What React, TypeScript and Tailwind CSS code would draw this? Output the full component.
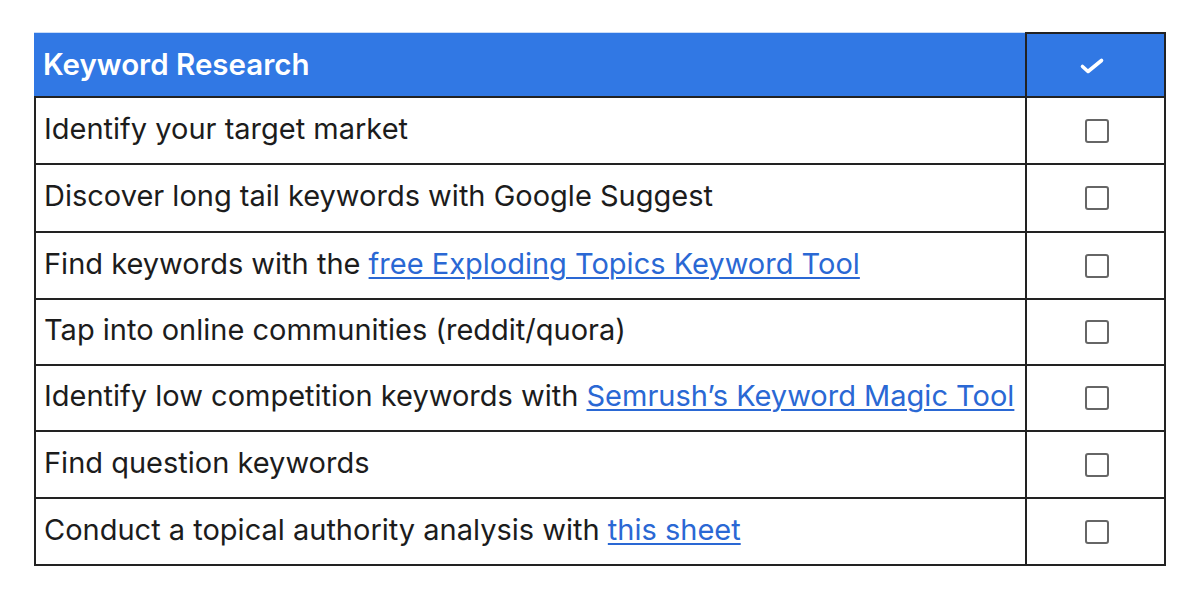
import React from "react";

const rows: { text: string; link?: string }[] = [
  { text: "Identify your target market" },
  { text: "Discover long tail keywords with Google Suggest" },
  { text: "Find keywords with the ", link: "free Exploding Topics Keyword Tool" },
  { text: "Tap into online communities (reddit/quora)" },
  { text: "Identify low competition keywords with ", link: "Semrush’s Keyword Magic Tool" },
  { text: "Find question keywords" },
  { text: "Conduct a topical authority analysis with ", link: "this sheet" },
];

const heights = ["h-[67px]", "h-[68px]", "h-[67px]", "h-[66px]", "h-[66px]", "h-[67px]", "h-[67px]"];

export default function App() {
  return (
    <div
      className="w-[1200px] h-[597px] bg-white pt-[32px] pl-[34px]"
      style={{ fontFamily: "Inter, 'Noto Sans', sans-serif" }}
    >
      <div className="w-[1132px] border-b-2 border-[#222]">
        <div className="flex h-[64px]">
          <div className="w-[991px] bg-[#3178e4] flex items-center pl-[9px] text-white font-semibold text-[29.5px] border-t border-[#c9dcf8]">
            Keyword Research
          </div>
          <div className="w-[141px] bg-[#3178e4] border-2 border-b-0 border-[#222] flex items-center justify-center">
            <svg width="26" height="18" viewBox="0 0 26 18" className="ml-[-7px] mt-[2px]">
              <path d="M3.5 9.5 L9 14.5 L22.5 3.5" fill="none" stroke="white" strokeWidth="3.6" strokeLinecap="round" strokeLinejoin="round" />
            </svg>
          </div>
        </div>
        {rows.map((r, i) => (
          <div key={i} className={`flex ${heights[i]} border-t-2 border-[#222]`}>
            <div className="w-[991px] border-l-2 border-[#222] flex items-center pl-[8px] pb-[4px] text-[29px] text-[#1c1c1c] whitespace-nowrap">
              <span>
                {r.text}
                {r.link && <span className="text-[#2a68d4] underline underline-offset-[3px] decoration-[1.5px]">{r.link}</span>}
              </span>
            </div>
            <div className="w-[141px] border-l-2 border-r-2 border-[#222] flex items-center justify-center">
              <div className="w-[24px] h-[24px] border-[2.5px] border-[#666] rounded-[3px] ml-[2px]" />
            </div>
          </div>
        ))}
      </div>
    </div>
  );
}
